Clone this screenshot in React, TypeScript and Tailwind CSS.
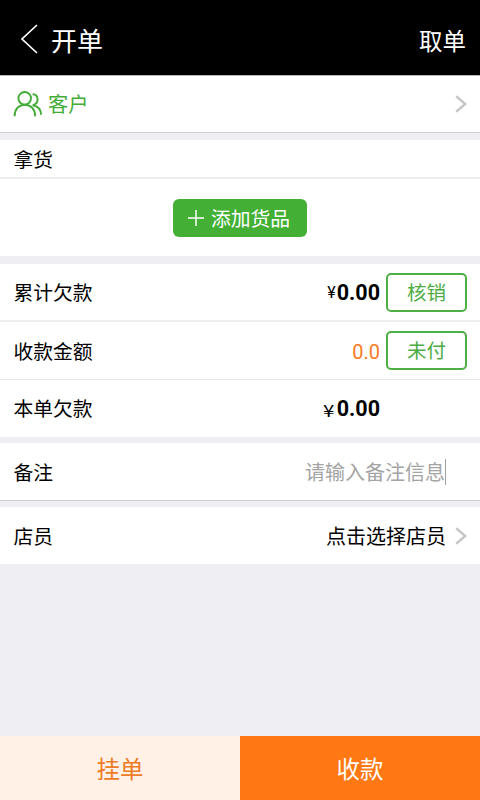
import type { ReactNode } from "react";

function Arrow({ className = "" }: { className?: string }) {
  return (
    <svg className={`h-[18px] w-3 shrink-0 ${className}`} viewBox="0 0 12 18" fill="none" stroke="#c7c7c7" strokeWidth="2.5">
      <path d="M1.2 1.2 10.2 9 1.2 16.8" />
    </svg>
  );
}

function Row({ label, className = "", children }: { label: string; className?: string; children?: ReactNode }) {
  return (
    <div className={`flex shrink-0 items-center justify-between bg-white pl-[13.5px] ${className}`}>
      <span className="pt-1 text-[19.8px] leading-6">{label}</span>
      {children}
    </div>
  );
}

function OutlineButton({ children }: { children: ReactNode }) {
  return (
    <button className="ml-1.5 h-[39px] w-[81px] rounded-[5px] border-2 border-[#4eb044] pt-[3px] text-[19.5px] leading-6 text-[#4dab43]">
      {children}
    </button>
  );
}

export default function App() {
  return (
    <div className="flex h-[800px] w-[480px] flex-col overflow-hidden bg-[#eeeef3] font-['Roboto','Noto_Sans_CJK_SC',sans-serif] text-black">
      <header className="flex h-[75px] shrink-0 items-center bg-black pr-3.5 pl-5 text-white">
        <svg className="mt-[3px] h-[30px] w-[18px]" viewBox="0 0 18 30" fill="none" stroke="currentColor" strokeWidth="1.7">
          <path d="M17 1 2 15 17 29" />
        </svg>
        <h1 className="mt-2 ml-[13px] text-[26px] leading-8">开单</h1>
        <button className="mt-2 ml-auto text-[23.5px] leading-8">取单</button>
      </header>

      <div className="flex h-[58px] shrink-0 items-center border-t border-b border-t-[#b8b8b8] border-b-[#cfcfd4] bg-white pr-[13px] pl-[13px] text-[#43ac37]">
        <svg className="h-[27px] w-[30px]" viewBox="0 0 30 27" fill="none" stroke="currentColor" strokeWidth="1.9">
          <circle cx="11.7" cy="7.3" r="6.3" />
          <path d="M1.6 25.3C1.6 18.4 5.6 13.7 11.8 13.7S22.2 18.4 22.2 25.3" />
          <path d="M19.6 3.2C22.6 3 24.6 5.2 24.6 8.3 24.6 11.2 22.8 13.4 19.8 14.2 25 15.2 28 18.7 28 23.7" />
        </svg>
        <span className="ml-[5px] pt-0.5 text-[20.3px] leading-6">客户</span>
        <Arrow className="ml-auto" />
      </div>

      <Row label="拿货" className="mt-[7px] h-[39px] border-b-2 border-[#eeeeef]" />
      <div className="flex h-[77px] shrink-0 items-center justify-center bg-white">
        <button className="flex h-[38px] w-[134px] items-center rounded-md bg-[#43b035] pl-[15px] text-white">
          <svg className="h-4 w-4" viewBox="0 0 16 16" fill="none" stroke="currentColor" strokeWidth="1.5">
            <path d="M8 0V16M0 8H16" />
          </svg>
          <span className="ml-[7px] pt-[4px] text-[19.8px] leading-6">添加货品</span>
        </button>
      </div>

      <Row label="累计欠款" className="mt-2 h-[58px] border-b-2 border-[#eeeeef] pr-[13px]">
        <div className="flex items-center">
          <span className="mr-px pt-0.5 text-base leading-6">¥</span>
          <b className="pt-0.5 text-[21.5px] leading-6">0.00</b>
          <OutlineButton>核销</OutlineButton>
        </div>
      </Row>
      <Row label="收款金额" className="h-[58px] border-b border-[#e8e8ea] pr-[13px]">
        <div className="flex items-center">
          <span className="pt-0.5 text-[20px] leading-6 text-[#f97a25]">0.0</span>
          <OutlineButton>未付</OutlineButton>
        </div>
      </Row>
      <Row label="本单欠款" className="h-[57px] pr-[100px] pb-px">
        <div className="flex items-center">
          <span className="mt-1 mr-[3px] font-['Noto_Sans_CJK_SC',sans-serif] text-[17px] leading-6 [transform:scaleX(1.2)]">¥</span>
          <b className="pt-0.5 text-[21.5px] leading-6">0.00</b>
        </div>
      </Row>

      <Row label="备注" className="mt-1.5 h-[58px] border-b border-[#cfcfd0] pr-[34px]">
        <div className="flex items-center">
          <span className="pt-[3px] text-[20px] leading-6 text-[#a4a4a4]">请输入备注信息</span>
          <i className="h-[26px] w-px bg-[#a0a0a0]" />
        </div>
      </Row>

      <Row label="店员" className="mt-[6px] h-[57px] pr-[13px]">
        <div className="flex items-center">
          <span className="pt-[3px] text-[20px] leading-6">点击选择店员</span>
          <Arrow className="ml-[9px]" />
        </div>
      </Row>

      <footer className="mt-auto grid h-16 shrink-0 grid-cols-2 text-[23.5px]">
        <button className="bg-[#fff1e5] pt-1.5 text-[#ee7b27]">挂单</button>
        <button className="bg-[#ff7814] pt-1.5 text-white">收款</button>
      </footer>
    </div>
  );
}
